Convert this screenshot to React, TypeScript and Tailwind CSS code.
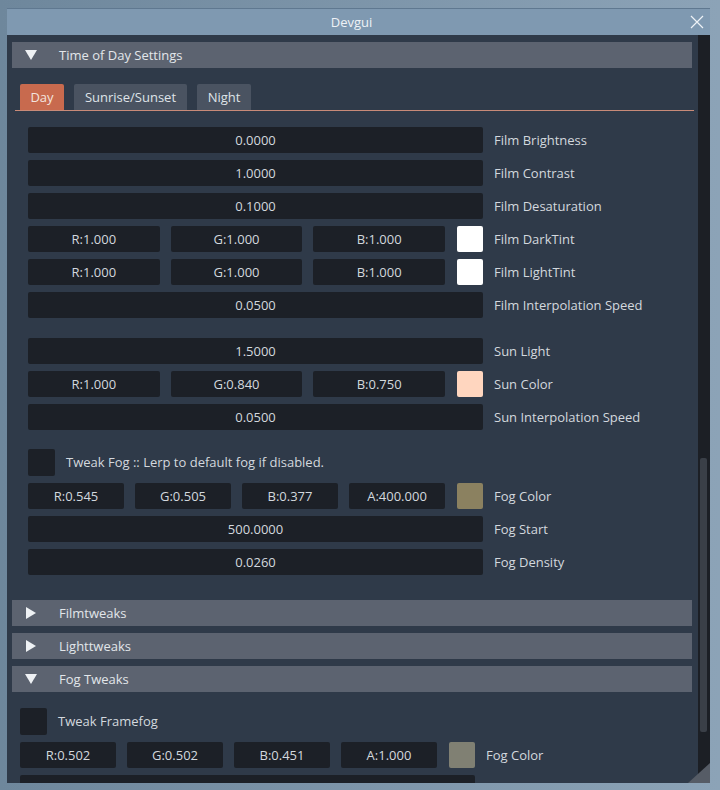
import type { ReactNode } from "react";

const font = { fontFamily: '"Open Sans", "Noto Sans", sans-serif' };

function Field({ children, className = "" }: { children?: ReactNode; className?: string }) {
  return (
    <div
      className={`flex h-[26px] items-center justify-center rounded-[2px] bg-[#1c2027] pt-[2px] text-[13px] text-[#d3d8de] ${className}`}
    >
      {children}
    </div>
  );
}

function Label({ children }: { children: ReactNode }) {
  return <span className="ml-[11px] whitespace-nowrap pt-[2px] text-[13px] text-[#d3d8de]">{children}</span>;
}

function ValueRow({ value, label }: { value: string; label: string }) {
  return (
    <div className="flex items-center">
      <Field className="w-[455px]">{value}</Field>
      <Label>{label}</Label>
    </div>
  );
}

function ColorRow({ parts, swatch, label }: { parts: string[]; swatch: string; label: string }) {
  return (
    <div className="flex items-center">
      <div className="flex w-[455px] items-center gap-[11px]">
        {parts.map((p) => (
          <Field key={p} className="flex-1">
            {p}
          </Field>
        ))}
        <div className="ml-px h-[26px] w-[26px] shrink-0 rounded-[2px]" style={{ backgroundColor: swatch }} />
      </div>
      <Label>{label}</Label>
    </div>
  );
}

function Check({ label }: { label: string }) {
  return (
    <div className="flex items-center">
      <div className="h-[27px] w-[27px] rounded-[2px] bg-[#1c2027]" />
      <span className="ml-[11px] pt-[1px] text-[13px] text-[#d3d8de]">{label}</span>
    </div>
  );
}

function Header({ title, open }: { title: string; open: boolean }) {
  return (
    <div className="flex h-[26px] items-center bg-[#5c6370] pt-[2px] text-[13px] text-[#e2e6ea]">
      <svg width="14" height="14" viewBox="0 0 14 14" className="ml-[12px] -mt-[2px]">
        {open ? <polygon points="1,2 13,2 7,12" fill="#eef1f4" /> : <polygon points="2,1 12,7 2,13" fill="#eef1f4" />}
      </svg>
      <span className="ml-[21px]">{title}</span>
    </div>
  );
}

export default function App() {
  return (
    <div className="h-[790px] w-[720px] bg-gradient-to-r from-[#6e879c] to-[#8ca3b7] pl-[7px] pt-[8px]" style={font}>
      <div className="relative flex h-[775px] w-[703px] flex-col overflow-hidden">
        {/* title bar */}
        <div className="relative flex h-[27px] shrink-0 items-center justify-center border-t border-[#5f7890] bg-[#7f99b1] pt-[1px] text-[13px] text-[#eef2f6]">
          <span className="-ml-[14px]">Devgui</span>
          <svg width="14" height="14" viewBox="0 0 14 14" className="absolute right-[6px] top-[6px]">
            <path d="M1 1 L13 13 M13 1 L1 13" stroke="#eef2f6" strokeWidth="1.2" />
          </svg>
        </div>

        <div className="flex min-h-0 flex-1 bg-[#2f3a49]">
          {/* content */}
          <div className="flex-1 pl-[5px] pr-[6px] pt-[7px]">
            <Header title="Time of Day Settings" open />

            <div className="mt-[16px] flex gap-[10px] pl-[8px] text-[13px]">
              <div className="flex h-[26px] w-[44px] items-center justify-center rounded-t-[2px] bg-[#c86a4e] pt-[2px] text-[#f3e4de]">Day</div>
              <div className="flex h-[26px] w-[113px] items-center justify-center rounded-t-[2px] bg-[#4a5361] pt-[2px] text-[#dfe3e8]">Sunrise/Sunset</div>
              <div className="flex h-[26px] w-[54px] items-center justify-center rounded-t-[2px] bg-[#4a5361] pt-[2px] text-[#dfe3e8]">Night</div>
            </div>
            <div className="ml-[3px] mr-[-2px] h-px bg-[#c88a78]" />

            <div className="flex flex-col gap-[7px] pl-[16px] pt-[16px]">
              <ValueRow value="0.0000" label="Film Brightness" />
              <ValueRow value="1.0000" label="Film Contrast" />
              <ValueRow value="0.1000" label="Film Desaturation" />
              <ColorRow parts={["R:1.000", "G:1.000", "B:1.000"]} swatch="#ffffff" label="Film DarkTint" />
              <ColorRow parts={["R:1.000", "G:1.000", "B:1.000"]} swatch="#ffffff" label="Film LightTint" />
              <ValueRow value="0.0500" label="Film Interpolation Speed" />
              <div className="mt-[13px]">
                <ValueRow value="1.5000" label="Sun Light" />
              </div>
              <ColorRow parts={["R:1.000", "G:0.840", "B:0.750"]} swatch="#ffd6bf" label="Sun Color" />
              <ValueRow value="0.0500" label="Sun Interpolation Speed" />
              <div className="mt-[12px]">
                <Check label="Tweak Fog :: Lerp to default fog if disabled." />
              </div>
              <ColorRow parts={["R:0.545", "G:0.505", "B:0.377", "A:400.000"]} swatch="#8b8160" label="Fog Color" />
              <ValueRow value="500.0000" label="Fog Start" />
              <ValueRow value="0.0260" label="Fog Density" />
            </div>

            <div className="mt-[25px] flex flex-col gap-[7px]">
              <Header title="Filmtweaks" open={false} />
              <Header title="Lighttweaks" open={false} />
              <Header title="Fog Tweaks" open />
            </div>

            <div className="flex flex-col gap-[7px] pl-[8px] pt-[16px]">
              <Check label="Tweak Framefog" />
              <ColorRow parts={["R:0.502", "G:0.502", "B:0.451", "A:1.000"]} swatch="#808073" label="Fog Color" />
              <Field className="w-[455px]" />
            </div>
          </div>

          {/* scrollbar */}
          <div className="flex w-[12px] shrink-0 flex-col bg-[#1c1f25] px-[2px] pr-[3px]">
            <div className="h-[423px]" />
            <div className="h-[274px] rounded-[2px] bg-[#3a3f47]" />
          </div>
        </div>

        {/* resize grip */}
        <svg width="22" height="20" viewBox="0 0 22 20" className="absolute bottom-0 right-0">
          <polygon points="0,20 22,0 22,20" fill="#565c66" />
        </svg>
      </div>
    </div>
  );
}
